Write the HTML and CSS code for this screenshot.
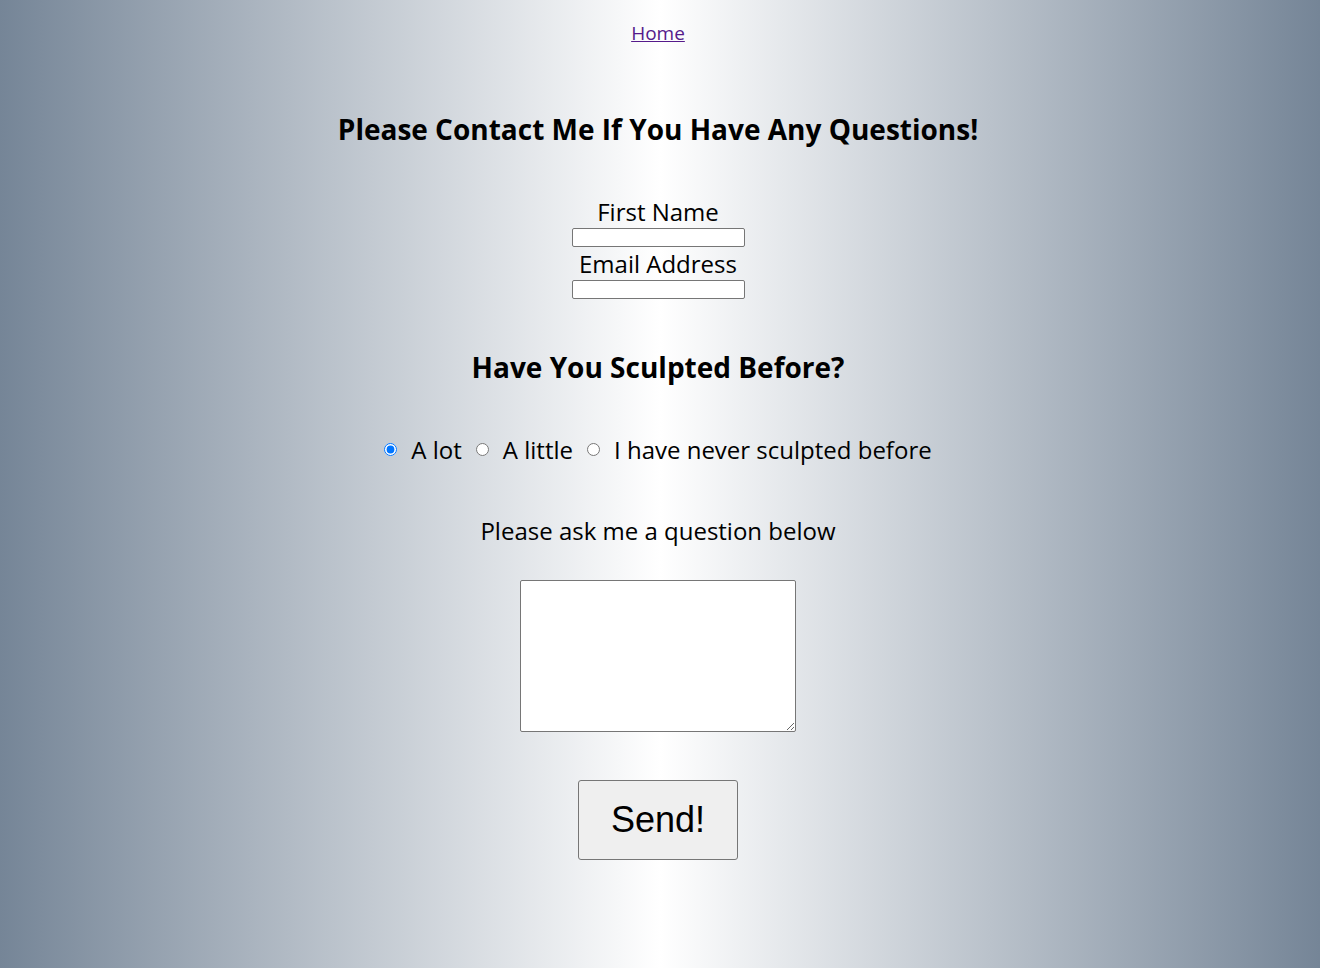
FILE: index.html
```html
<!DOCTYPE html>
<html>
<head>
<meta charset="utf-8">
<link rel="stylesheet" href="styles.css">
</head>
<body>
<nav class="nav"><a href="#" class="home">Home</a></nav>
<h1 class="title">Please Contact Me If You Have Any Questions!</h1>
<form class="form">
  <div class="fields">
    <label class="label" for="fn">First Name</label>
    <input class="field" id="fn" type="text">
    <label class="label" for="em">Email Address</label>
    <input class="field" id="em" type="text">
  </div>
  <h2 class="subtitle">Have You Sculpted Before?</h2>
  <div class="radios">
    <input type="radio" name="s" id="r1" checked><label for="r1">A lot</label>
    <input type="radio" name="s" id="r2"><label for="r2">A little</label>
    <input type="radio" name="s" id="r3"><label for="r3">I have never sculpted before</label>
  </div>
  <p class="ask">Please ask me a question below</p>
  <textarea class="question"></textarea>
  <button type="button" class="send">Send!</button>
</form>
</body>
</html>
```
FILE: styles.css
```css
html {
  min-height: 100%;
}
body {
  margin: 0;
  padding-right: 4px;
  min-height: 968px;
  background: linear-gradient(to right, #758597, #ffffff, #758597);
  font-family: "Open Sans", sans-serif;
  color: #000;
  text-align: center;
}
.nav {
  padding-top: 20px;
}
.home {
  font-size: 19px;
  color: #551a8b;
}
.title {
  font-size: 28px;
  font-weight: 700;
  margin: 64px 0 0;
}
.form {
  display: flex;
  flex-direction: column;
  align-items: center;
}
.fields {
  display: flex;
  flex-direction: column;
  align-items: center;
  margin-top: 48px;
}
.label {
  font-size: 24px;
  line-height: 32px;
  display: block;
}
.field {
  width: 173px;
  height: 19px;
  box-sizing: border-box;
  border: 1px solid #767676;
  border-radius: 2px;
  background: #fff;
  margin: 0 0 1px;
  padding: 1px 2px;
}
.subtitle {
  font-size: 28px;
  font-weight: 700;
  margin: 48px 0 0;
}
.radios {
  display: flex;
  align-items: center;
  font-size: 24px;
  margin-top: 47px;
}
.radios input {
  margin: 0 14px 0 0;
  width: 13px;
  height: 13px;
}
.radios label {
  margin-right: 14px;
}
.radios label:last-child {
  margin-right: 0;
}
.ask {
  font-size: 24px;
  margin: 48px 0 0;
}
.question {
  margin-top: 33px;
  width: 276px;
  height: 152px;
  box-sizing: border-box;
  border: 1px solid #767676;
  border-radius: 2px;
  background: #fff;
}
.send {
  margin-top: 48px;
  width: 160px;
  height: 80px;
  font-family: "Liberation Sans", Arial, sans-serif;
  font-size: 36px;
  color: #000;
  background: #efefef;
  border: 1px solid #767676;
  border-radius: 3px;
}
```
